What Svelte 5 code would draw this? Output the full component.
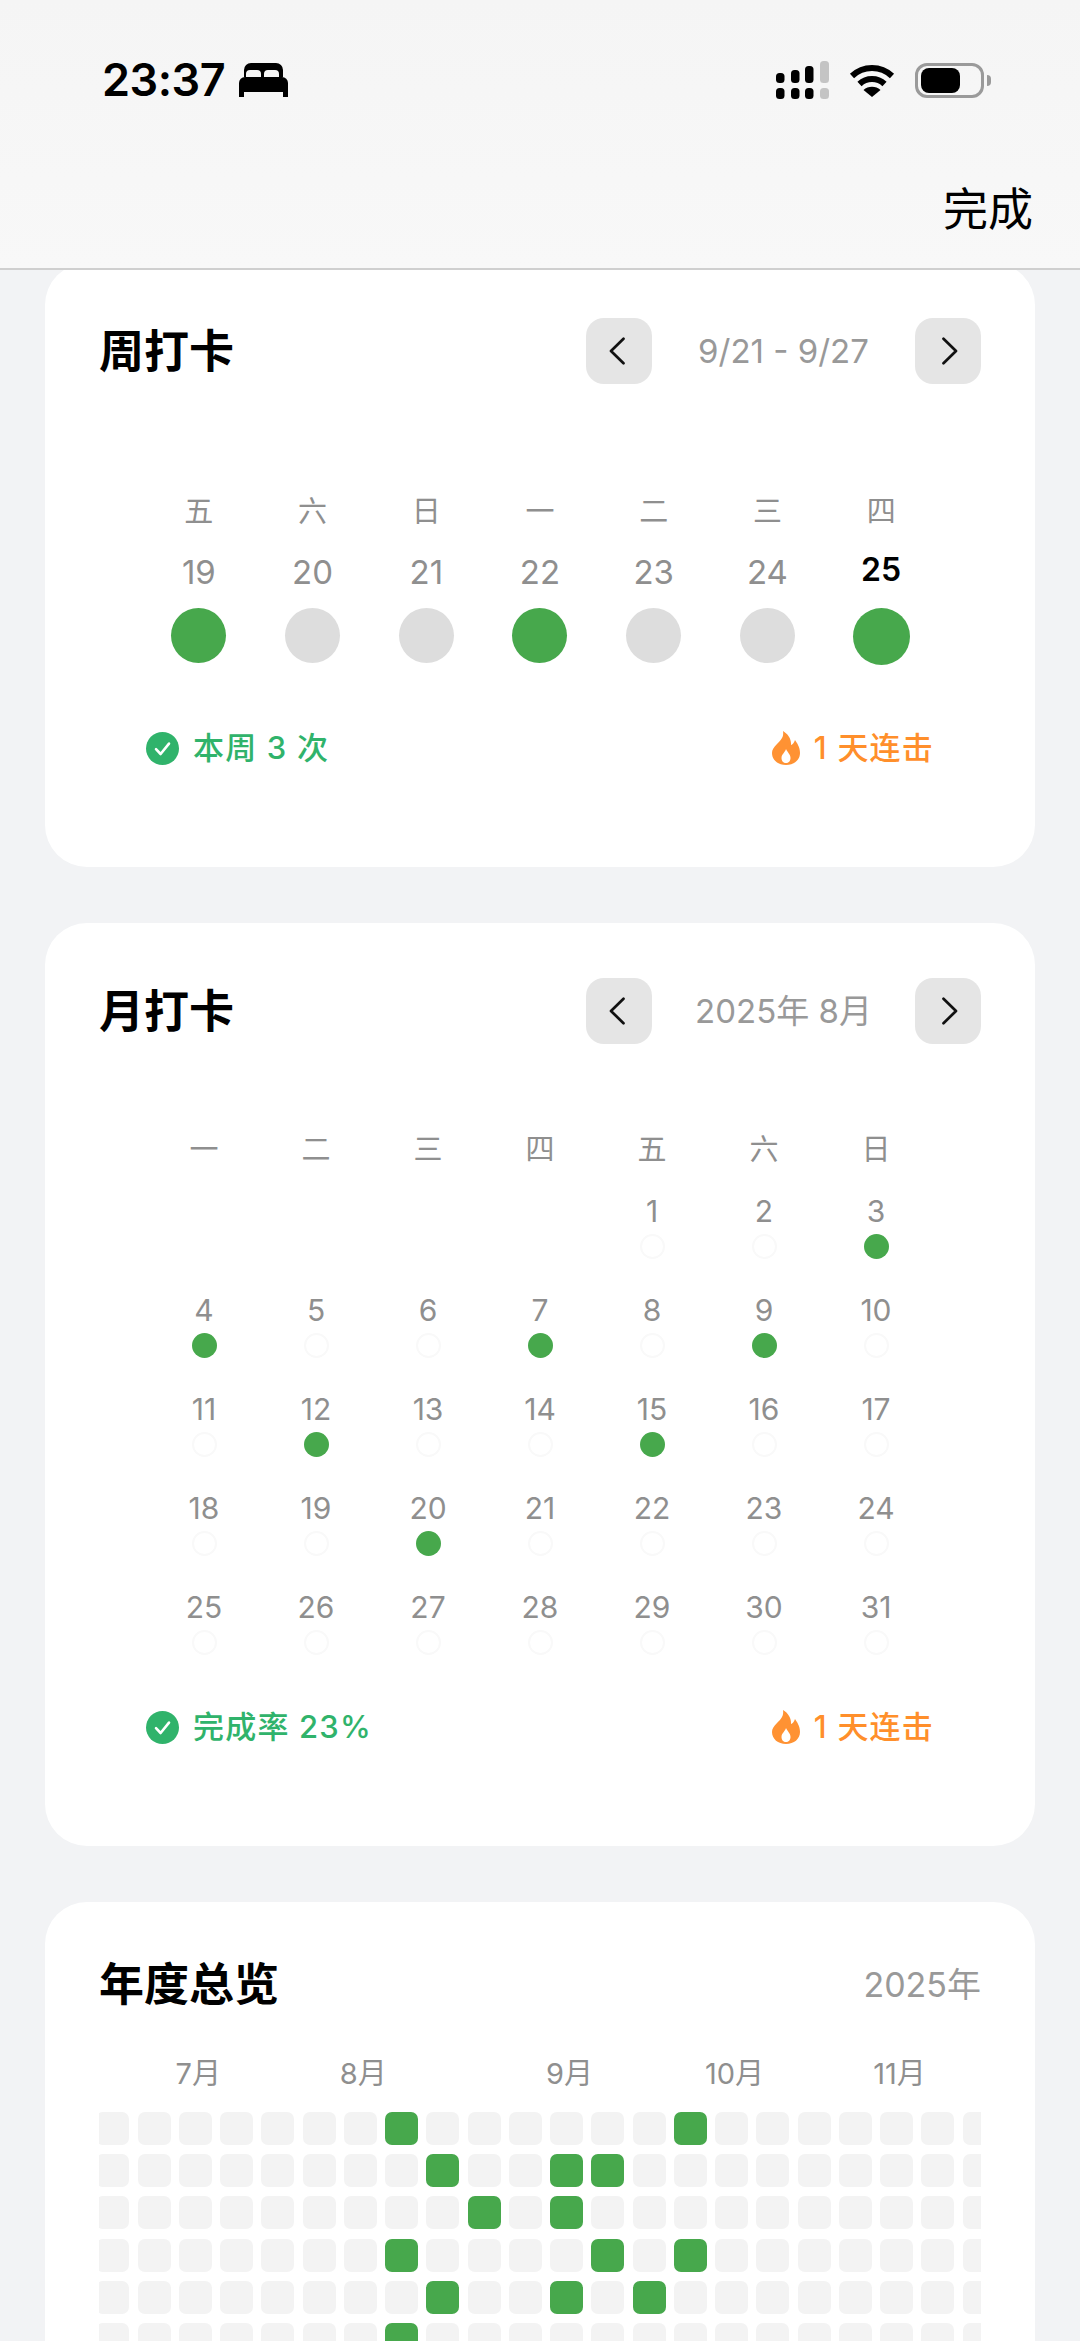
<script>
  const weekDays = [
    { w: '五', d: 19, on: true },
    { w: '六', d: 20, on: false },
    { w: '日', d: 21, on: false },
    { w: '一', d: 22, on: true },
    { w: '二', d: 23, on: false },
    { w: '三', d: 24, on: false },
    { w: '四', d: 25, on: true, today: true }
  ];
  const monthHead = ['一', '二', '三', '四', '五', '六', '日'];
  const blanks = [0, 1, 2, 3];
  const monthOn = [3, 4, 7, 9, 12, 15, 20];
  const monthDays = Array.from({ length: 31 }, (_, i) => i + 1);
  const monthLabels = [
    { t: '7月', c: 2 },
    { t: '8月', c: 6 },
    { t: '9月', c: 11 },
    { t: '10月', c: 15 },
    { t: '11月', c: 19 }
  ];
  const heat = [[7, 14], [8, 11, 12], [9, 11], [7, 12, 14], [8, 11, 13], [7]];
  const cols = Array.from({ length: 22 }, (_, i) => i);
</script>

{#snippet chevron(dir)}
  <button class="nav-btn" aria-label={dir}>
    <svg width="20" height="28" viewBox="0 0 20 28">
      <path d={dir === 'prev' ? 'M14.5 1.8 L2 14 L14.5 26.2' : 'M5.5 1.8 L18 14 L5.5 26.2'} fill="none" stroke="#111" stroke-width="2.7" stroke-linecap="round" stroke-linejoin="round" />
    </svg>
  </button>
{/snippet}

{#snippet foot(label)}
  <div class="foot">
    <span class="stat green">
      <svg width="33" height="33" viewBox="0 0 33 33">
        <circle cx="16.5" cy="16.5" r="16.5" fill="#30b36b" />
        <path d="M10 17.2 L14.6 22 L23 11.6" fill="none" stroke="#fff" stroke-width="2.6" stroke-linecap="round" stroke-linejoin="round" />
      </svg>
      {label}
    </span>
    <span class="stat orange">
      <svg width="28" height="34" viewBox="0 0 28 34">
        <path d="M11 0C12 6 9 9 5 13C1.5 16.5 0 19 0 22C0 29 6 34 14 34C22 34 28 29 28 22C28 16 25 12 23 9C22 12 20.5 13.5 19 14C19.5 8 16 3 11 0Z" fill="#ff9233" />
        <path d="M14 18C13.5 21 9.5 23 9.5 27C9.5 30 11.5 32 14 32C16.5 32 18.5 30 18.5 27C18.5 23 15 21 14 18Z" fill="#fff" />
      </svg>
      1 天连击
    </span>
  </div>
{/snippet}

<div class="page">
  <header class="top">
    <div class="status">
      <div class="status-left">
        <span class="time">23:37</span>
        <svg width="49" height="34" viewBox="0 0 49 34">
          <path d="M5 14V7a7 7 0 0 1 7-7h25a7 7 0 0 1 7 7v7h-4v-3a4 4 0 0 0-4-4h-7a4 4 0 0 0-4 4v3h-3v-3a4 4 0 0 0-4-4h-7a4 4 0 0 0-4 4v3z" fill="#000" />
          <path d="M6 14h37a6 6 0 0 1 6 6v14h-5v-5H5v5H0V20a6 6 0 0 1 6-6z" fill="#000" />
        </svg>
      </div>
      <div class="status-right">
        <svg width="53" height="38" viewBox="0 0 53 38">
          <g fill="#000">
            <rect x="0" y="12" width="8.5" height="10" rx="3.5" />
            <rect x="15" y="9" width="8.5" height="13" rx="3.5" />
            <rect x="29" y="5" width="8.5" height="17" rx="3.5" />
            <rect x="0" y="27" width="8.5" height="11" rx="3.5" />
            <rect x="15" y="27" width="8.5" height="11" rx="3.5" />
            <rect x="29" y="27" width="8.5" height="11" rx="3.5" />
          </g>
          <g fill="#c4c4c4">
            <rect x="44" y="0" width="9" height="22" rx="3.5" />
            <rect x="44" y="27" width="9" height="11" rx="3.5" />
          </g>
        </svg>
        <svg width="46" height="34" viewBox="0 0 46 34">
          <path d="M3 13A29 29 0 0 1 43 13" fill="none" stroke="#000" stroke-width="6" />
          <path d="M10.5 21A18 18 0 0 1 35.5 21" fill="none" stroke="#000" stroke-width="6" />
          <path d="M23 34L14.5 27A13 13 0 0 1 31.5 27Z" fill="#000" />
        </svg>
        <div class="battery">
          <span class="battery-fill"></span>
          <span class="battery-nub"></span>
        </div>
      </div>
    </div>
    <div class="nav"><span class="done">完成</span></div>
  </header>

  <main class="content">
    <section class="card week-card">
      <div class="card-head">
        <h2>周打卡</h2>
        <div class="pager">
          {@render chevron('prev')}
          <span class="range">9/21 - 9/27</span>
          {@render chevron('next')}
        </div>
      </div>
      <div class="week-grid">
        {#each weekDays as day}
          <div class="week-col">
            <span class="head-label">{day.w}</span>
            <span class="week-num" class:today={day.today}>{day.d}</span>
            <span class="week-dot" class:on={day.on} class:today={day.today}></span>
          </div>
        {/each}
      </div>
      {@render foot('本周 3 次')}
    </section>

    <section class="card month-card">
      <div class="card-head">
        <h2>月打卡</h2>
        <div class="pager">
          {@render chevron('prev')}
          <span class="range">2025年 8月</span>
          {@render chevron('next')}
        </div>
      </div>
      <div class="month-head">
        {#each monthHead as h}
          <span class="head-label">{h}</span>
        {/each}
      </div>
      <div class="month-grid">
        {#each blanks as b}
          <span class="month-blank"></span>
        {/each}
        {#each monthDays as d}
          <div class="month-cell">
            <span class="month-num">{d}</span>
            <span class="month-dot" class:on={monthOn.includes(d)}></span>
          </div>
        {/each}
      </div>
      {@render foot('完成率 23%')}
    </section>

    <section class="card year-card">
      <div class="card-head year-head">
        <h2>年度总览</h2>
        <span class="range">2025年</span>
      </div>
      <div class="heat-wrap">
        <div class="heat-labels">
          {#each monthLabels as m}
            <span class="heat-label" style="grid-column: {m.c + 1}">{m.t}</span>
          {/each}
        </div>
        <div class="heat-grid">
          {#each heat as row}
            {#each cols as c}
              <span class="heat-cell" class:on={row.includes(c)}></span>
            {/each}
          {/each}
        </div>
      </div>
    </section>
  </main>
</div>

<style>
  :global(body) {
    margin: 0;
    background: #f2f3f5;
  }
  .page {
    height: 2341px;
    overflow: hidden;
    background: #f2f3f5;
    font-family: Inter, "Noto Sans CJK SC", sans-serif;
    color: #000;
  }
  .top {
    position: relative;
    z-index: 1;
    box-sizing: border-box;
    height: 270px;
    background: linear-gradient(#f5f5f5, #f8f8f8);
    border-bottom: 2px solid #cfcfcf;
    padding: 61px 47px 0 102px;
  }
  .status {
    display: flex;
    justify-content: space-between;
    align-items: center;
    height: 38px;
    margin-right: 43px;
  }
  .status-left {
    display: flex;
    align-items: center;
    gap: 14px;
  }
  .time {
    font-size: 45px;
    font-weight: 600;
    line-height: 38px;
    letter-spacing: -0.5px;
  }
  .status-right {
    display: flex;
    align-items: center;
    gap: 20px;
  }
  .battery {
    position: relative;
    box-sizing: border-box;
    width: 69px;
    height: 35px;
    border: 3px solid #9a9a9a;
    border-radius: 12px;
    margin-right: 6px;
  }
  .battery-fill {
    position: absolute;
    left: 3px;
    top: 2px;
    width: 39px;
    height: 25px;
    border-radius: 8px;
    background: #000;
  }
  .battery-nub {
    position: absolute;
    right: -10px;
    top: 9px;
    width: 4px;
    height: 11px;
    border-radius: 0 4px 4px 0;
    background: #9a9a9a;
  }
  .nav {
    display: flex;
    justify-content: flex-end;
    margin-top: 83px;
  }
  .done {
    font-size: 45px;
    line-height: 56px;
  }
  .content {
    margin-top: -7px;
    padding: 0 45px;
    display: flex;
    flex-direction: column;
    gap: 56px;
  }
  .card {
    box-sizing: border-box;
    background: #fff;
    border-radius: 42px;
    padding: 55px 54px 99px;
  }
  .card-head {
    display: flex;
    justify-content: space-between;
    align-items: center;
    height: 66px;
  }
  h2 {
    margin: 0;
    padding-top: 2px;
    font-size: 45px;
    line-height: 60px;
    font-weight: 600;
  }
  .pager {
    display: flex;
    align-items: center;
    width: 395px;
  }
  .nav-btn {
    flex: none;
    width: 66px;
    height: 66px;
    padding: 0;
    border: 0;
    border-radius: 18px;
    background: #e5e5e5;
    display: flex;
    align-items: center;
    justify-content: center;
  }
  .range {
    flex: 1;
    text-align: center;
    font-size: 33px;
    line-height: 40px;
    color: #999;
  }
  .head-label {
    font-size: 29px;
    line-height: 40px;
    color: #8f8f8f;
  }
  .week-grid {
    display: grid;
    grid-template-columns: repeat(7, 1fr);
    margin: 108px 43px 0;
  }
  .week-col {
    display: flex;
    flex-direction: column;
    align-items: center;
    height: 173px;
  }
  .week-num {
    margin-top: 20px;
    font-size: 33px;
    line-height: 40px;
    color: #8f8f8f;
  }
  .week-num.today {
    margin-top: 18px;
    margin-bottom: 2px;
    font-size: 32px;
    color: #000;
    font-weight: 600;
  }
  .week-dot {
    margin-top: 16px;
    width: 55px;
    height: 55px;
    border-radius: 50%;
    background: #dddddd;
  }
  .week-dot.on {
    background: #47a84c;
  }
  .week-dot.today {
    width: 57px;
    height: 57px;
  }
  .foot {
    display: flex;
    justify-content: space-between;
    align-items: center;
    height: 40px;
    margin: 63px 47px 0;
  }
  .stat {
    display: flex;
    align-items: center;
    gap: 14px;
    font-size: 31px;
    line-height: 40px;
    font-weight: 500;
    letter-spacing: 1.2px;
  }
  .green {
    color: #30b36b;
  }
  .orange {
    color: #ff8f2b;
  }
  .month-head {
    display: grid;
    grid-template-columns: repeat(7, 1fr);
    justify-items: center;
    margin: 86px 49px 0;
  }
  .month-grid {
    display: grid;
    grid-template-columns: repeat(7, 1fr);
    row-gap: 31px;
    margin: 21px 49px 0;
  }
  .month-cell {
    display: flex;
    flex-direction: column;
    align-items: center;
    height: 68px;
  }
  .month-num {
    font-size: 30px;
    line-height: 40px;
    color: #8f8f8f;
  }
  .month-dot {
    box-sizing: border-box;
    margin-top: 3px;
    width: 25px;
    height: 25px;
    border-radius: 50%;
    border: 2px solid #f9f9f9;
  }
  .month-dot.on {
    border: 0;
    background: #47a84c;
  }
  .month-card .foot {
    margin-top: 52px;
  }
  .year-card {
    padding-top: 53px;
  }
  .year-head {
    height: 60px;
  }
  .year-head h2 {
    padding-top: 0;
  }
  .year-head .range {
    flex: none;
    font-size: 34px;
  }
  .heat-wrap {
    overflow: hidden;
    margin-top: 39px;
  }
  .heat-labels,
  .heat-grid {
    display: grid;
    grid-template-columns: repeat(22, 33px);
    column-gap: 8.25px;
    margin-left: -2.75px;
  }
  .heat-labels {
    height: 40px;
    margin-bottom: 18px;
    margin-left: 0.25px;
  }
  .heat-label {
    display: flex;
    justify-content: center;
    white-space: nowrap;
    font-size: 29px;
    line-height: 40px;
    color: #8f8f8f;
  }
  .heat-grid {
    grid-auto-rows: 33px;
    row-gap: 9.2px;
  }
  .heat-cell {
    border-radius: 7px;
    background: #f3f3f3;
  }
  .heat-cell.on {
    background: #47a84c;
  }
</style>
